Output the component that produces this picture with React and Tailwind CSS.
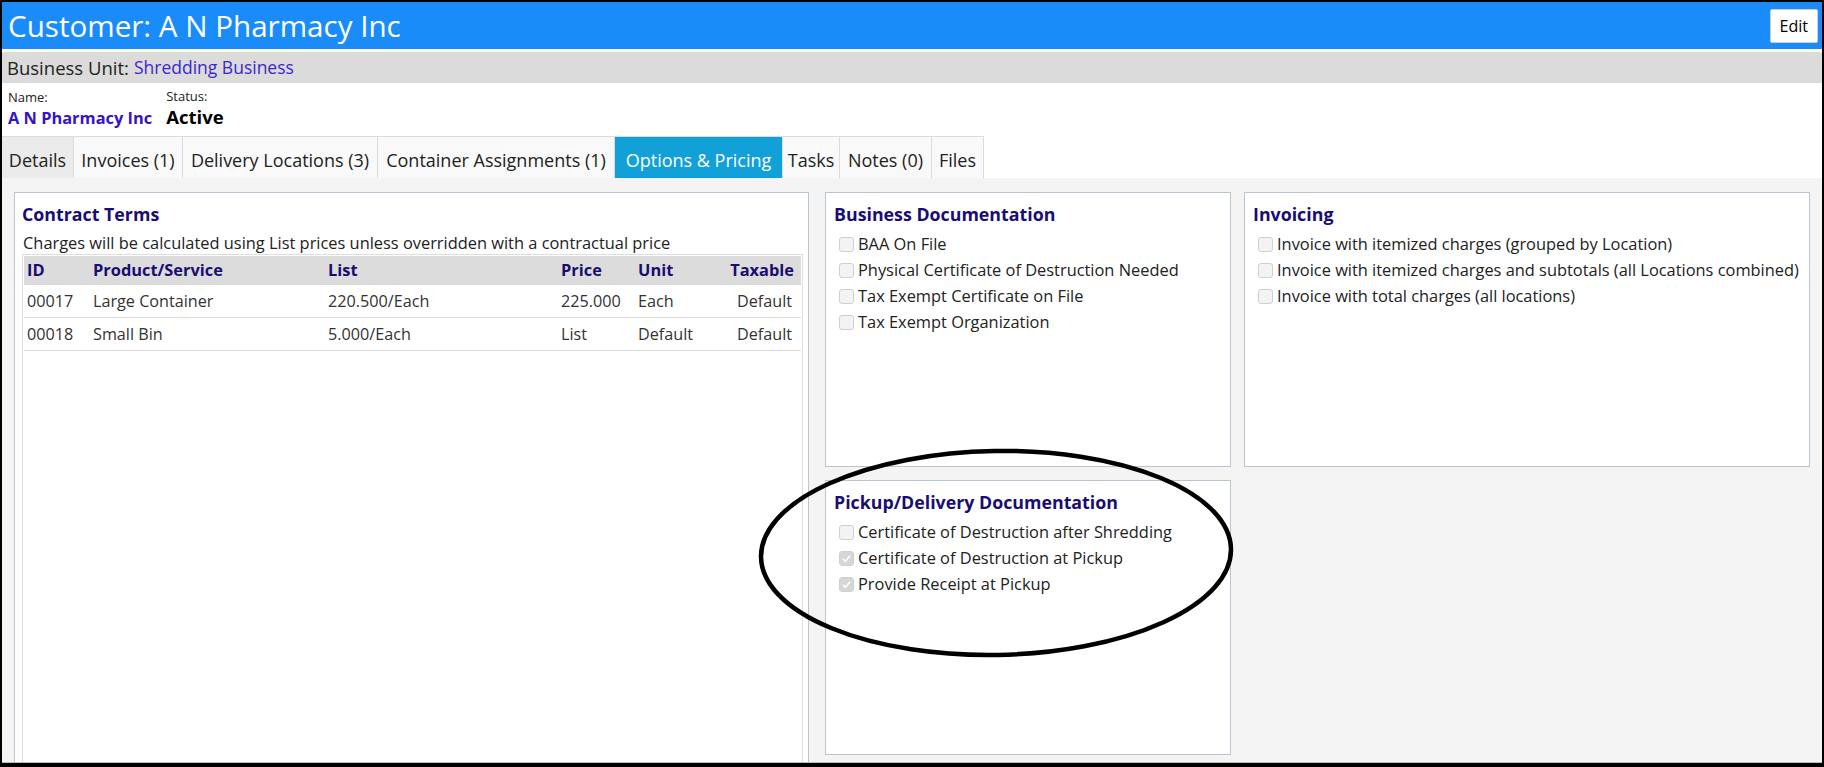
import React from 'react'

const tabs = [
  { label: 'Details', w: 'w-[72px]', bg: 'bg-[#ebebeb]' },
  { label: 'Invoices (1)', w: 'w-[109px]' },
  { label: 'Delivery Locations (3)', w: 'w-[195px]' },
  { label: 'Container Assignments (1)', w: 'w-[237px]' },
  { label: 'Options & Pricing', w: 'w-[168px]', active: true },
  { label: 'Tasks', w: 'w-[57px]' },
  { label: 'Notes (0)', w: 'w-[92px]' },
  { label: 'Files', w: 'w-[52px]' },
]

const rows = [
  ['00017', 'Large Container', '220.500/Each', '225.000', 'Each', 'Default'],
  ['00018', 'Small Bin', '5.000/Each', 'List', 'Default', 'Default'],
]

const Check = ({ label, checked }) => (
  <div className="flex items-center h-[26px] pl-[5px]">
    <span className="w-[15px] h-[15px] rounded-[3px] border border-[#d0d0d0] bg-[#f3f3f3] flex items-center justify-center mr-[4px] shrink-0">
      {checked && (
        <svg viewBox="0 0 16 16" className="w-[13px] h-[13px]">
          <rect x="0" y="0" width="16" height="16" rx="2" fill="#d6d6d6" />
          <path d="M3.5 8.5 L6.5 11.5 L12.5 4.5" stroke="#fff" strokeWidth="2" fill="none" />
        </svg>
      )}
    </span>
    <span className="text-[16.4px] text-[#222] whitespace-nowrap">{label}</span>
  </div>
)

const Panel = ({ title, children }) => (
  <div className="bg-white border border-[#b9c6d2] pl-[8px] pt-[9px]">
    <h3 className="text-[17.8px] font-bold text-[#1a0d72] leading-[24px] mb-[5px]">{title}</h3>
    {children}
  </div>
)

export default function App() {
  return (
    <div className="w-[1824px] h-[767px] border-2 border-b-[4px] border-black bg-white overflow-hidden flex flex-col font-['Open_Sans',sans-serif] relative">
      {/* header */}
      <div className="h-[47px] bg-[#1a8cfa] flex items-center justify-between pl-[6px] pr-[4px] shrink-0">
        <h1 className="text-[29.6px] text-white leading-none">Customer: A N Pharmacy Inc</h1>
        <button className="h-[34px] px-[9px] bg-white border border-[#cfcfcf] rounded-[2px] text-[16px] text-black">Edit</button>
      </div>

      <div className="h-[31px] mt-[3px] bg-[#dbdbdb] flex items-center px-[5px] text-[18.5px] text-[#222] shrink-0">
        Business Unit:<span className="ml-[5px] text-[17.5px] text-[#3e27c8]">Shredding Business</span>
      </div>

      {/* name / status */}
      <div className="h-[53px] flex gap-[14px] px-[6px] pt-[6px] shrink-0">
        <div>
          <div className="text-[13px] text-[#222] leading-[17px]">Name:</div>
          <div className="text-[16.4px] font-bold text-[#3514c4] leading-[24px]">A N Pharmacy Inc</div>
        </div>
        <div>
          <div className="text-[13px] text-[#222] leading-[15px]">Status:</div>
          <div className="text-[18.5px] font-bold text-black leading-[26px]">Active</div>
        </div>
      </div>

      {/* tabs */}
      <div className="flex h-[42px] shrink-0">
        {tabs.map(t => (
          <div
            key={t.label}
            className={`${t.w} flex items-center justify-center pt-[5px] text-[18px] whitespace-nowrap border-t border-r border-[#dcdcdc] ${
              t.active ? 'bg-[#12a0d8] text-white border-[#12a0d8]' : `${t.bg || 'bg-[#f9f9f9]'} text-[#222]`
            }`}
          >
            {t.label}
          </div>
        ))}
      </div>

      {/* content */}
      <div className="flex-1 bg-[#f4f4f4] border-b border-[#bdbdbd] flex gap-[16px] pl-[12px] pt-[14px] min-h-0">
        <div className="w-[795px] bg-white border border-b-0 border-[#b9c6d2] pl-[7px] pr-[5px] pt-[9px] flex flex-col">
          <h3 className="text-[17.8px] font-bold text-[#1a0d72] leading-[24px]">Contract Terms</h3>
          <p className="text-[16.4px] text-[#222] leading-[22px] mt-[6px] pl-[1px]">
            Charges will be calculated using List prices unless overridden with a contractual price
          </p>
          <div className="flex-1 border border-b-0 border-[#dedede] p-[1px]">
            <div className="grid grid-cols-[66px_235px_233px_77px_1fr_auto] bg-[#dcdcdc] h-[29px] items-center pl-[3px] pr-[7px] text-[16.4px] font-bold text-[#1a0d72]">
              <span>ID</span>
              <span>Product/Service</span>
              <span>List</span>
              <span>Price</span>
              <span>Unit</span>
              <span className="text-right">Taxable</span>
            </div>
            {rows.map(r => (
              <div key={r[0]} className="grid grid-cols-[66px_235px_233px_77px_1fr_auto] h-[33px] items-center pl-[3px] pr-[9px] text-[16.2px] text-[#333] border-b border-[#dedede]">
                <span>{r[0]}</span>
                <span>{r[1]}</span>
                <span>{r[2]}</span>
                <span>{r[3]}</span>
                <span>{r[4]}</span>
                <span className="text-right">{r[5]}</span>
              </div>
            ))}
          </div>
        </div>

        <div className="grid grid-cols-[406px_566px] grid-rows-[275px_275px] gap-x-[13px] gap-y-[13px]">
          <Panel title="Business Documentation">
            <Check label="BAA On File" />
            <Check label="Physical Certificate of Destruction Needed" />
            <Check label="Tax Exempt Certificate on File" />
            <Check label="Tax Exempt Organization" />
          </Panel>
          <Panel title="Invoicing">
            <Check label="Invoice with itemized charges (grouped by Location)" />
            <Check label="Invoice with itemized charges and subtotals (all Locations combined)" />
            <Check label="Invoice with total charges (all locations)" />
          </Panel>
          <Panel title="Pickup/Delivery Documentation">
            <Check label="Certificate of Destruction after Shredding" />
            <Check label="Certificate of Destruction at Pickup" checked />
            <Check label="Provide Receipt at Pickup" checked />
          </Panel>
        </div>
      </div>

      {/* hand-drawn highlight ellipse */}
      <svg className="absolute left-[754px] top-[444px] pointer-events-none" width="480" height="214" viewBox="0 0 480 214">
        <ellipse cx="240" cy="107" rx="235" ry="102" fill="none" stroke="#000" strokeWidth="4.5" transform="rotate(-1 240 107)" />
      </svg>
    </div>
  )
}
